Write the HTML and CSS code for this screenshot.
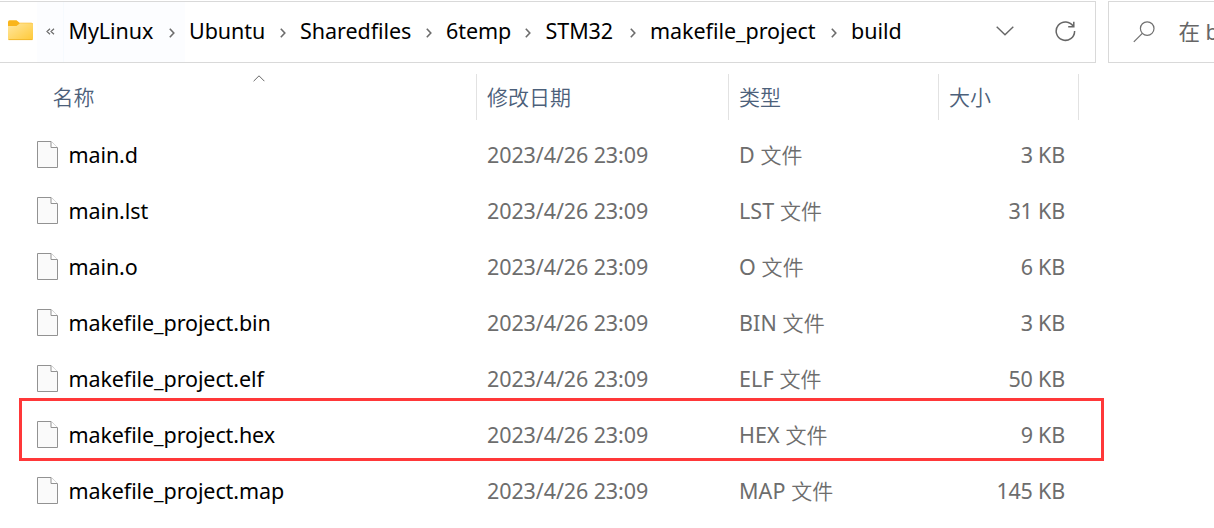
FILE: index.html
```html
<!DOCTYPE html>
<html lang="zh-CN">
<head>
<meta charset="utf-8">
<title>build</title>
<link rel="stylesheet" href="styles.css">
</head>
<body>
<svg class="defs" width="0" height="0" aria-hidden="true">
  <defs>
    <linearGradient id="folder-fill" x1="0" y1="0" x2="1" y2="1"><stop offset="0" stop-color="#ffe7a0"/><stop offset="1" stop-color="#ffc937"/></linearGradient>
    <symbol id="file" viewBox="0 0 21 27"><path d="M.5 .5H14L20.5 7V26.5H.5Z" fill="#fafafa" stroke="#929292"/><path d="M14 .5V6.5H20.5" fill="#fff" stroke="#929292"/></symbol>
    <symbol id="sep" viewBox="0 0 6 10"><path d="M.8 .8L4.8 5L.8 9.2" fill="none" stroke="#6c6c6c" stroke-width="1.6"/></symbol>
  </defs>
</svg>
<div class="window">
  <header class="toolbar">
    <nav class="address">
      <svg class="folder" width="25" height="21" viewBox="0 0 25 21"><path d="M0 2Q0 .3 1.7 .3H8.5L11.5 2.8H23.5Q25 2.8 25 4.3V12H0Z" fill="#f9b51b"/><path d="M0 6H8.5L12 3.3H23.7Q25 3.3 25 4.6V18.5Q25 20 23.5 20H1.5Q0 20 0 18.5Z" fill="url(#folder-fill)"/><path d="M.5 19.6H24.5" stroke="#f2b82c"/></svg>
      <span class="overflow"><svg width="9" height="7" viewBox="0 0 9 7"><path d="M4 .7L1 3.5L4 6.3M8 .7L5 3.5L8 6.3" fill="none" stroke="#6c6c6c" stroke-width="1.2"/></svg></span>
      <span class="crumb hot w-mylinux"><span>MyLinux</span><svg class="sep"><use href="#sep"/></svg></span>
      <span class="crumb w-ubuntu"><span>Ubuntu</span><svg class="sep"><use href="#sep"/></svg></span>
      <span class="crumb w-shared"><span>Sharedfiles</span><svg class="sep"><use href="#sep"/></svg></span>
      <span class="crumb w-temp"><span>6temp</span><svg class="sep"><use href="#sep"/></svg></span>
      <span class="crumb w-stm"><span>STM32</span><svg class="sep"><use href="#sep"/></svg></span>
      <span class="crumb w-project"><span>makefile_project</span><svg class="sep"><use href="#sep"/></svg></span>
      <span class="crumb w-build"><span>build</span></span>
      <svg class="down" width="18" height="10" viewBox="0 0 18 10"><path d="M.7 .7L9 8.8L17.3 .7" fill="none" stroke="#666" stroke-width="1.4"/></svg>
      <svg class="refresh" width="21" height="21" viewBox="0 0 21 21"><path d="M18.3 5.4A9.2 9.2 0 1 0 19.6 10M18.8 .8V5.7H13.2" fill="none" stroke="#666" stroke-width="1.5"/></svg>
    </nav>
    <div class="search">
      <svg width="22" height="22" viewBox="0 0 22 22"><circle cx="14.2" cy="7.6" r="6.8" fill="none" stroke="#707070" stroke-width="1.2"/><path d="M9.3 12.4L.8 20.9" stroke="#707070" stroke-width="1.2"/></svg>
      <span>在 b</span>
    </div>
  </header>
  <main class="list">
    <div class="head">
      <div class="h-name">名称<svg class="sort" width="12" height="7" viewBox="0 0 12 7"><path d="M.6 6.2L6 .8L11.4 6.2" fill="none" stroke="#666"/></svg></div>
      <div>修改日期</div><div>类型</div><div>大小</div>
    </div>
    <div class="row"><span class="name"><svg class="file"><use href="#file"/></svg><span>main.d</span></span><span class="date">2023/4/26 23:09</span><span class="type">D <i>文件</i></span><span class="size">3 KB</span></div>
    <div class="row"><span class="name"><svg class="file"><use href="#file"/></svg><span>main.lst</span></span><span class="date">2023/4/26 23:09</span><span class="type">LST <i>文件</i></span><span class="size">31 KB</span></div>
    <div class="row"><span class="name"><svg class="file"><use href="#file"/></svg><span>main.o</span></span><span class="date">2023/4/26 23:09</span><span class="type">O <i>文件</i></span><span class="size">6 KB</span></div>
    <div class="row"><span class="name"><svg class="file"><use href="#file"/></svg><span>makefile_project.bin</span></span><span class="date">2023/4/26 23:09</span><span class="type">BIN <i>文件</i></span><span class="size">3 KB</span></div>
    <div class="row"><span class="name"><svg class="file"><use href="#file"/></svg><span>makefile_project.elf</span></span><span class="date">2023/4/26 23:09</span><span class="type">ELF <i>文件</i></span><span class="size">50 KB</span></div>
    <div class="row marked"><span class="name"><svg class="file"><use href="#file"/></svg><span>makefile_project.hex</span></span><span class="date">2023/4/26 23:09</span><span class="type">HEX <i>文件</i></span><span class="size">9 KB</span></div>
    <div class="row"><span class="name"><svg class="file"><use href="#file"/></svg><span>makefile_project.map</span></span><span class="date">2023/4/26 23:09</span><span class="type">MAP <i>文件</i></span><span class="size">145 KB</span></div>
  </main>
</div>
</body>
</html>
```
FILE: styles.css
```css
*, *::after { box-sizing: border-box; }
body { margin: 0; background: #fff; font: 21.5px/30px "Noto Sans", "Noto Sans CJK SC", sans-serif; color: #000; overflow: hidden; }
svg { display: block; flex: none; }
.defs { position: absolute; }
.window { width: 1214px; height: 528px; overflow: hidden; white-space: nowrap; padding-top: 1px; }
.toolbar { display: flex; gap: 12px; height: 62px; }
.address { display: flex; align-items: center; width: 1096px; flex: none; border: 1px solid #d9d9d9; border-left: 0; padding-left: 8px; }
.folder { margin-right: 4px; margin-top: -3px; }
.overflow { display: flex; align-items: center; width: 27px; height: 60px; padding: 0 0 1px 9px; background: #fcfdff; border-right: 1px solid #f6fafe; }
.crumb { display: flex; align-items: center; justify-content: space-between; height: 60px; padding: 0 10px 0 4.5px; letter-spacing: -.05px; flex: none; }
.crumb > span { margin-top: -2px; }
.crumb.hot { background: #fcfdff; }
.sep { width: 6px; height: 10px; margin-top: 2px; }
.w-mylinux { width: 120.5px; }
.w-ubuntu { width: 111px; }
.w-shared { width: 146px; }
.w-temp { width: 99.5px; }
.w-stm { width: 104.5px; }
.w-project { width: 201px; }
.down { margin: -2px 0 0 auto; }
.refresh { margin: -2px 19px 0 41px; }
.search { display: flex; align-items: center; gap: 23.5px; flex: 1; border: 1px solid #d9d9d9; border-right: 0; padding-left: 24px; color: #666; overflow: hidden; }
.search svg { margin-top: -1px; }
.head { display: grid; grid-template-columns: 477px 252px 210px 140px; height: 46px; margin-top: 11px; color: #4c607a; font-size: 21px; font-family: "Noto Sans CJK SC", sans-serif; font-weight: 350; }
.head div { border-right: 1px solid #e2e2e2; padding: 7px 0 0 10px; }
.head .h-name { display: flex; padding-left: 52.5px; }
.sort { margin: -6px 0 0 158.5px; }
.row { display: grid; grid-template-columns: 477px 252px 210px 140px; height: 56px; align-items: center; color: #6d6d6d; }
.head + .row { margin-top: 7px; }
.name { display: flex; align-items: center; padding-left: 37px; color: #000; letter-spacing: -.1px; }
.file { width: 21px; height: 27px; margin: -2px 10.5px 0 0; }
.date, .type { padding-left: 10px; }
.date { letter-spacing: -.1px; }
.type { letter-spacing: .1px; }
.type i { font-family: "Noto Sans CJK SC", sans-serif; font-style: normal; font-weight: 350; font-size: 21px; line-height: 1; }
.size { padding-right: 14px; text-align: right; letter-spacing: -.2px; }
.marked { position: relative; }
.marked::after { content: ""; position: absolute; left: 19px; top: -9px; width: 1085px; height: 63px; border: 3px solid #ff3839; }
```
